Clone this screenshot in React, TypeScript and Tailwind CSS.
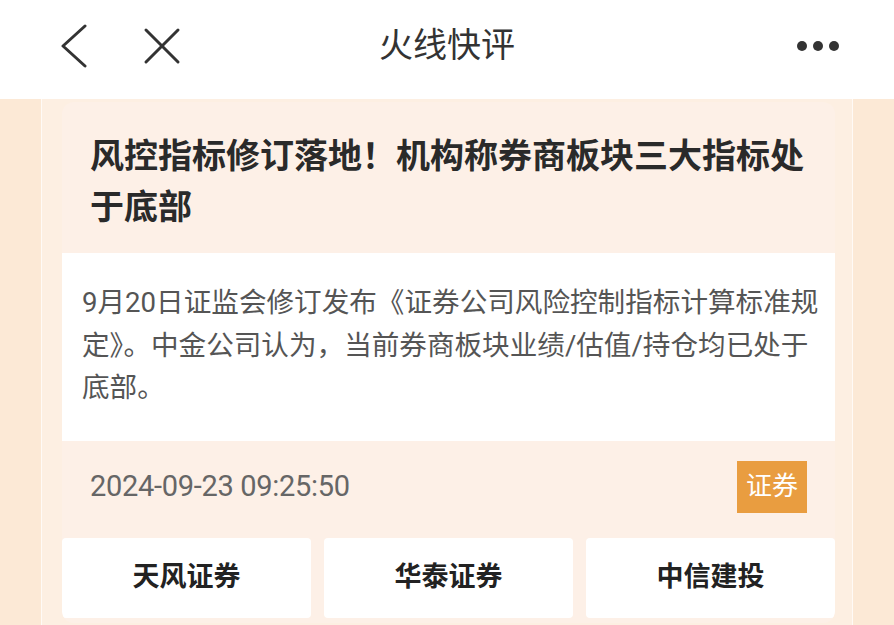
const cjk = "font-['Roboto','Noto_Sans_CJK_SC',sans-serif]";

export default function App() {
  return (
    <div className={`h-[625px] w-[894px] overflow-hidden bg-[#fce9d6] ${cjk}`}>
      {/* top bar */}
      <div className="relative flex h-[99px] items-center bg-white pl-[60px] pr-[55px]">
        <svg width="28" height="44" viewBox="0 0 28 44" fill="none" stroke="#333" strokeWidth="3" strokeLinecap="round" strokeLinejoin="round" className="-mt-[8px]">
          <polyline points="25,2 3,22 25,42" />
        </svg>
        <svg width="38" height="38" viewBox="0 0 38 38" fill="none" stroke="#333" strokeWidth="3" strokeLinecap="round" className="-mt-[8px] ml-[55px]">
          <line x1="3" y1="3" x2="35" y2="35" />
          <line x1="35" y1="3" x2="3" y2="35" />
        </svg>
        <h1 className="absolute left-1/2 top-[45px] -translate-x-1/2 -translate-y-1/2 text-[34px] text-[#333]">
          火线快评
        </h1>
        <div className="-mt-[8px] ml-auto flex gap-[6px]">
          <span className="h-[10px] w-[10px] rounded-full bg-[#333]" />
          <span className="h-[10px] w-[10px] rounded-full bg-[#333]" />
          <span className="h-[10px] w-[10px] rounded-full bg-[#333]" />
        </div>
      </div>

      <div className="ml-[41px] mr-[41px] h-full border-x border-white/70 bg-[#fdefe2] pl-[20px] pr-[17px] pt-[3px]">
        <div className="overflow-hidden rounded-[12px] bg-[#fdf0e7]">
          <div className="pb-[20px] pl-[28px] pr-[10px] pt-[29px] text-[34px] font-bold leading-[51px] text-[#2a2a2a]">
            风控指标修订落地！机构称券商板块三大指标处于底部
          </div>

          <div className="whitespace-nowrap bg-white pb-[31px] pl-[20px] pr-[10px] pt-[29px] text-[27.6px] leading-[42.5px] text-[#555]">
            9月20日证监会修订发布《证券公司风险控制指标计算标准规
            <br />
            定》。中金公司认为，当前券商板块业绩/估值/持仓均已处于
            <br />
            底部。
          </div>

          <div className="flex items-center justify-between pb-[25px] pl-[28px] pr-[28px] pt-[20px]">
            <span className="text-[29px] tracking-[-0.3px] text-[#666]">2024-09-23 09:25:50</span>
            <span className="flex h-[52px] w-[70px] items-center justify-center bg-[#e99d40] text-[26px] text-white">
              证券
            </span>
          </div>

          <div className="grid grid-cols-3 gap-[13px] pb-[5px]">
            {["天风证券", "华泰证券", "中信建投"].map((name) => (
              <div
                key={name}
                className="flex h-[80px] items-center justify-center rounded-[4px] bg-white text-[27px] font-bold text-[#222]"
              >
                {name}
              </div>
            ))}
          </div>
        </div>
      </div>
    </div>
  );
}
